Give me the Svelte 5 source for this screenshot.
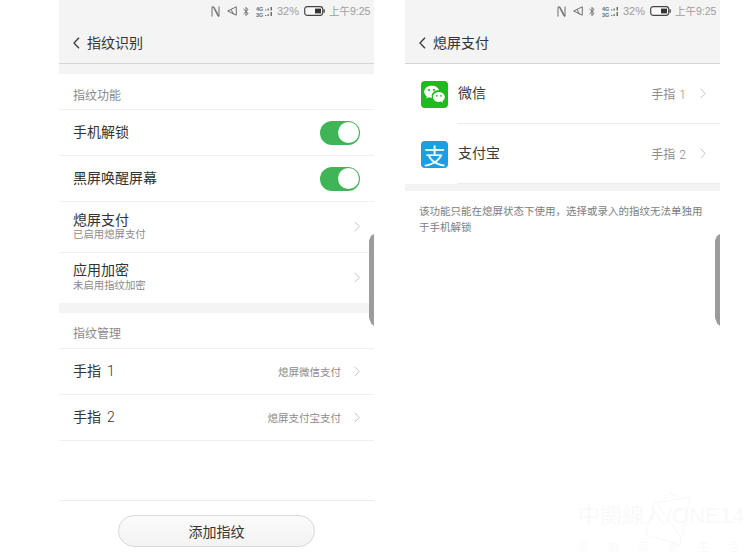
<script>
  const fingers = [
    { name: '手指', num: '1', note: '熄屏微信支付' },
    { name: '手指', num: '2', note: '熄屏支付宝支付' }
  ];
</script>

{#snippet chevron(cls)}
  <svg class={cls} width="6" height="11" viewBox="0 0 6 11" fill="none"><path d="M.7.8 5.2 5.500.7 10.200" stroke="#c4c4c4" stroke-width="1"/></svg>
{/snippet}

{#snippet header(title)}
  <div class="top">
    <div class="status">
      <svg class="i-n" width="9" height="11" viewBox="0 0 9 11" fill="none" stroke="#6e6e6e" stroke-width="1"><path d="M1 10.500V.8h1.200L7 10.200h1V.5"/><path d="M2.800.8 8 10.200"/></svg>
      <svg class="i-m" width="10" height="10" viewBox="0 0 10 10" fill="none" stroke="#6e6e6e" stroke-width="1"><path d="M9.300.8.700 5l8.600 4.200zM4 3.400l2.700 5"/></svg>
      <svg class="i-b" width="6" height="11" viewBox="0 0 6 11" fill="none" stroke="#6e6e6e" stroke-width="1"><path d="M.5 3 5 7.400 3 9.600V1.400l2 2.200L.5 8"/></svg>
      <svg class="i-s" width="17" height="11" viewBox="0 0 17 11" fill="#6e6e6e"><text x="0" y="5" class="net">4G</text><text x="0" y="10.500" class="net">3G</text><rect x="9" y="3.500" width="1.300" height="1"/><rect x="11.500" y="2.500" width="1.300" height="2"/><rect x="14.500" y="1" width="1.500" height="3.500"/><rect x="9" y="9" width="1.300" height="1"/><rect x="11.500" y="8" width="1.300" height="2"/><rect x="14.500" y="6" width="1.500" height="4"/></svg>
      <span class="pct">32%</span>
      <svg class="i-bat" width="21" height="10" viewBox="0 0 21 10"><rect x=".7" y=".7" width="18" height="8.600" rx="2.500" fill="#fafafa" stroke="#444" stroke-width="1.200"/><rect x="11" y="2.600" width="6" height="4.800" fill="#333"/><rect x="19.400" y="3.300" width="1.400" height="3.400" fill="#444"/></svg>
      <span class="clock">上午9:25</span>
    </div>
    <div class="bar">
      <svg class="back" width="7" height="12" viewBox="0 0 7 12" fill="none"><path d="M6 .7 1 6l5 5.300" stroke="#3a3a3a" stroke-width="1.300"/></svg>
      <span>{title}</span>
    </div>
  </div>
{/snippet}

<div class="page">
  <section class="phone">
    {@render header('指纹识别')}
    <div class="band first"></div>
    <div class="sect">指纹功能</div>

    <div class="row sw">
      <span class="t">手机解锁</span>
      <span class="toggle"><i></i></span>
    </div>
    <div class="row sw">
      <span class="t">黑屏唤醒屏幕</span>
      <span class="toggle"><i></i></span>
    </div>
    <div class="row dbl">
      <div class="stack"><span class="t">熄屏支付</span><span class="s">已启用熄屏支付</span></div>
      {@render chevron('ch')}
    </div>
    <div class="row dbl last">
      <div class="stack"><span class="t up">应用加密</span><span class="s">未启用指纹加密</span></div>
      {@render chevron('ch')}
    </div>
    <div class="band mid"></div>
    <div class="sect two">指纹管理</div>

    {#each fingers as f}
      <div class="row sw">
        <span class="t">{f.name}<b class="num">{f.num}</b></span>
        <span class="note">{f.note}</span>
        {@render chevron('ch')}
      </div>
    {/each}

    <div class="foot">
      <button>添加指纹</button>
    </div>
    <div class="thumb"></div>
  </section>

  <section class="phone">
    {@render header('熄屏支付')}
    <div class="app">
      <svg class="logo" width="27" height="27" viewBox="0 0 27 27">
        <rect width="27" height="27" rx="4" fill="#1dbb1d"/>
        <path d="M10.400 4.800c-4 0-7.200 2.700-7.200 6 0 1.900 1 3.500 2.700 4.600l-.7 2.200 2.500-1.300c.9.300 1.800.4 2.700.4h.6c-.2-.6-.3-1.100-.3-1.700 0-3.300 3-5.800 6.800-5.800h.4c-.7-2.600-3.400-4.400-6.500-4.400z" fill="#fff"/>
        <path d="M23.800 15.900c0-2.800-2.700-5-5.900-5s-6 2.200-6 5 2.700 5 6 5c.7 0 1.400-.1 2-.3l2 1.100-.5-1.800c1.500-.9 2.400-2.400 2.400-4z" fill="#fff"/>
        <circle cx="8" cy="9.100" r="1.100" fill="#1dbb1d"/><circle cx="13" cy="9.100" r="1.100" fill="#1dbb1d"/>
        <circle cx="15.800" cy="14.800" r=".9" fill="#1dbb1d"/><circle cx="20" cy="14.800" r=".9" fill="#1dbb1d"/>
      </svg>
      <div class="app-body">
        <span class="t">微信</span>
        <span class="val">手指<b class="num tight">1</b></span>
        {@render chevron('ch2')}
      </div>
    </div>
    <div class="app">
      <div class="ali">支</div>
      <div class="app-body">
        <span class="t">支付宝</span>
        <span class="val">手指<b class="num tight">2</b></span>
        {@render chevron('ch2')}
      </div>
    </div>
    <div class="band small"></div>
    <p class="info">该功能只能在熄屏状态下使用&#65292;选择或录入的指纹无法单独用于手机解锁</p>
    <div class="thumb"></div>
  </section>

  <div class="mark">
    <svg class="mark-logo" width="60" height="56" viewBox="0 0 60 56" fill="none" stroke="#f7f7f7" stroke-width="1"><path d="M14 12 50 6 40 54 6 44zM24 8l6-6 8 4M18 14l24 34"/></svg>
    <div class="mark-a">中関線入/ONE14</div>
    <div class="mark-b">
      <span>灵</span><span>能</span><span>高</span><span>变</span><span>生</span><span>活</span>
    </div>
  </div>
</div>

<style>
  :global(body) {
    margin: 0;
    background: #fff;
  }
  .page {
    position: relative;
    display: flex;
    gap: 31px;
    width: 750px;
    height: 560px;
    padding-left: 59px;
    box-sizing: border-box;
    overflow: hidden;
    font-family: "Liberation Sans", "Noto Sans CJK SC", sans-serif;
    color: #333;
  }
  .phone {
    position: relative;
    width: 315px;
    flex: none;
  }
  .top {
    height: 63px;
    background: #f4f4f4;
    border-bottom: 1px solid #d6d6d6;
    display: flex;
    flex-direction: column;
  }
  .status {
    height: 22px;
    display: flex;
    align-items: center;
    justify-content: flex-end;
    padding-right: 5px;
    color: #9d9d9d;
    font-size: 11px;
    line-height: 22px;
  }
  .net { font-size: 5.500px; font-weight: 700; stroke: none; }
  .i-n { margin-right: 7px; }
  .i-m { margin-right: 6px; }
  .i-b { margin-right: 7px; }
  .i-s { margin-right: 4px; }
  .pct { margin-right: 5px; }
  .i-bat { margin-right: 4px; }
  .clock { font-size: 10.500px; width: 40px; white-space: nowrap; }
  .bar {
    flex: 1;
    display: flex;
    align-items: center;
    padding: 0 0 2px 14px;
    gap: 7px;
    font-size: 14px;
    color: #333;
  }
  .back { margin-top: 2px; }
  .band { background: #f4f4f4; }
  .band.first { height: 10px; }
  .band.mid { height: 10px; }
  .band.small { height: 7px; }
  .sect {
    height: 35px;
    padding-left: 14px;
    font-size: 12px;
    line-height: 44px;
    color: #8a8a8a;
    border-bottom: 1px solid #f0f0f0;
  }
  .sect.two { line-height: 43px; }
  .row {
    display: flex;
    align-items: center;
    padding: 0 14px;
    border-bottom: 1px solid #f0f0f0;
    box-sizing: border-box;
  }
  .row.sw { height: 46px; }
  .row.dbl { height: 50.500px; }
  .row.last { height: 50px; border-bottom: none; }
  .t {
    font-size: 14px;
    color: #333;
    line-height: 17px;
  }
  .up { margin-top: -1px; padding-bottom: 1px; }
  .num {
    font-family: Roboto, sans-serif;
    font-weight: 300;
    margin-left: 6px;
  }
  .num.tight { margin-left: 4px; }
  .stack {
    display: flex;
    flex-direction: column;
    flex: 1;
  }
  .s {
    font-size: 10.400px;
    line-height: 12px;
    color: #8c8c8c;
  }
  .row > .t { flex: 1; }
  .note {
    font-size: 10.500px;
    color: #8c8c8c;
    margin-right: 13px;
    white-space: nowrap;
  }
  .toggle {
    width: 40px;
    height: 24px;
    border-radius: 12px;
    background: #3fb557;
    padding: 1.500px;
    box-sizing: border-box;
    display: flex;
    justify-content: flex-end;
  }
  .toggle i {
    display: block;
    width: 21px;
    height: 21px;
    border-radius: 50%;
    background: #fff;
  }
  .foot {
    position: absolute;
    left: 0;
    right: 0;
    top: 500px;
    border-top: 1px solid #ececec;
    display: flex;
    justify-content: center;
    padding-top: 14px;
  }
  button {
    width: 197px;
    height: 32px;
    border-radius: 16px;
    border: 1px solid #d9d9d9;
    background: linear-gradient(#fbfbfb, #f3f3f3);
    font: inherit;
    font-size: 14px;
    color: #333;
    padding: 0;
  }
  .thumb {
    position: absolute;
    right: 0;
    top: 234px;
    width: 5px;
    height: 92px;
    background: #9c9c9c;
    clip-path: polygon(100% 0, 100% 100%, 40% 97%, 0 91%, 0 7%, 40% 2%);
  }
  .app {
    display: flex;
    align-items: center;
    height: 60px;
    padding-left: 16px;
    gap: 9px;
  }
  .logo, .ali { flex: none; }
  .ali {
    width: 27px;
    height: 27px;
    border-radius: 4px;
    background: #1b9fe3;
    color: #fff;
    font-size: 22px;
    line-height: 26px;
    text-align: center;
    font-family: "Noto Sans CJK SC", sans-serif;
  }
  .app-body {
    flex: 1;
    height: 100%;
    display: flex;
    align-items: center;
    padding-right: 14px;
    padding-left: 1px;
    border-bottom: 1px solid #ececec;
    box-sizing: border-box;
  }
  .app-body .t { flex: 1; color: #3c3c3c; }
  .val {
    font-size: 12px;
    color: #8c8c8c;
    margin-right: 14px;
    white-space: nowrap;
  }
  .info {
    margin: 12px 14px 0;
    font-size: 10.500px;
    line-height: 16px;
    color: #7d7d7d;
  }
  .mark {
    position: absolute;
    left: 578px;
    top: 503px;
    color: #f9f9f9;
    white-space: nowrap;
  }
  .mark-logo {
    position: absolute;
    left: 62px;
    top: -12px;
  }
  .mark-a {
    font-size: 22px;
    line-height: 26px;
  }
  .mark-b {
    display: flex;
    gap: 19px;
    font-size: 11px;
    margin-top: 9px;
  }
</style>
